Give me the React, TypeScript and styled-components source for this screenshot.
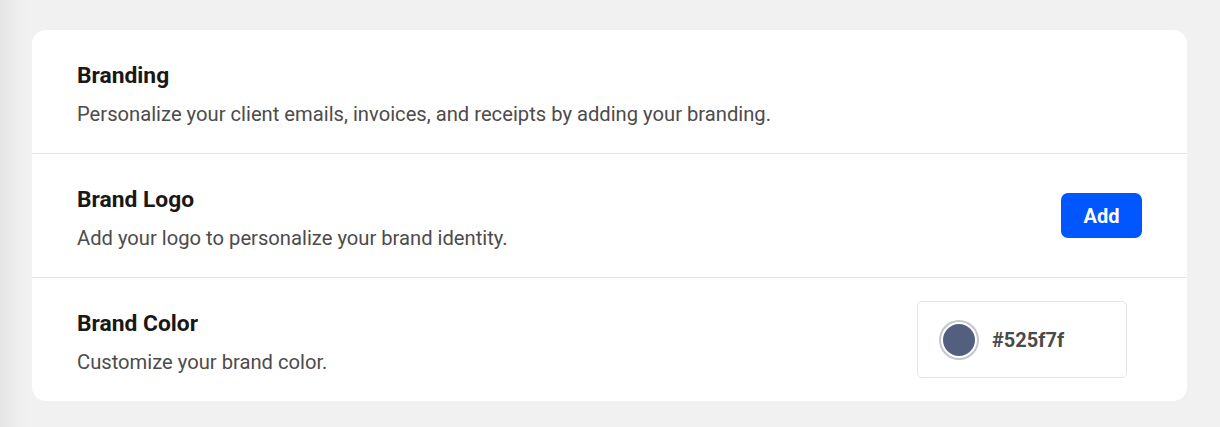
import React from "react";
import styled, { createGlobalStyle } from "styled-components";

const Global = createGlobalStyle`
  html, body { margin: 0; padding: 0; }
  body {
    font-family: Roboto, "Liberation Sans", Arial, sans-serif;
    background: linear-gradient(to right, #e4e4e4 0px, #efefef 18px, #f1f1f1 30px);
    min-height: 427px;
  }
`;

const Page = styled.div`
  padding: 30px 33px 26px 32px;
`;

const Card = styled.div`
  background: #ffffff;
  border-radius: 14px;
  overflow: hidden;
`;

const Row = styled.div<{ $last?: boolean }>`
  display: flex;
  align-items: center;
  justify-content: space-between;
  padding: 0 45px;
  height: 123px;
  border-bottom: ${(p) => (p.$last ? "none" : "1px solid #e4e4e4")};
`;

const Text = styled.div`
  display: flex;
  flex-direction: column;
  gap: 13px;
  padding-top: 5px;
`;

const Title = styled.div`
  font-size: 22.8px;
  line-height: 27px;
  font-weight: 700;
  color: #1a1717;
`;

const Desc = styled.div`
  font-size: 20.2px;
  line-height: 24px;
  color: #4d4b4b;
`;

const AddButton = styled.button`
  width: 81px;
  height: 45px;
  border: none;
  border-radius: 7px;
  background: #0057ff;
  color: #fff;
  font-family: Roboto, "Liberation Sans", Arial, sans-serif;
  font-size: 20px;
  font-weight: 700;
  cursor: pointer;
`;

const ColorBox = styled.div`
  width: 210px;
  height: 77px;
  box-sizing: border-box;
  border: 1px solid #e4e4e4;
  border-radius: 5px;
  display: flex;
  align-items: center;
  gap: 15px;
  padding-left: 22px;
  margin-right: 15px;
`;

const Swatch = styled.div<{ $color: string }>`
  width: 32px;
  height: 32px;
  border-radius: 50%;
  background: ${(p) => p.$color};
  border: 2px solid #fff;
  box-shadow: 0 0 0 2px #c3c7cf;
  margin-left: 1px;
`;

const Hex = styled.span`
  font-size: 20px;
  font-weight: 700;
  color: #4a4a4a;
`;

export default function App() {
  return (
    <>
      <Global />
      <Page>
        <Card>
          <Row>
            <Text>
              <Title>Branding</Title>
              <Desc>Personalize your client emails, invoices, and receipts by adding your branding.</Desc>
            </Text>
          </Row>
          <Row>
            <Text>
              <Title>Brand Logo</Title>
              <Desc>Add your logo to personalize your brand identity.</Desc>
            </Text>
            <AddButton>Add</AddButton>
          </Row>
          <Row $last>
            <Text>
              <Title>Brand Color</Title>
              <Desc>Customize your brand color.</Desc>
            </Text>
            <ColorBox>
              <Swatch $color="#525f7f" />
              <Hex>#525f7f</Hex>
            </ColorBox>
          </Row>
        </Card>
      </Page>
    </>
  );
}
